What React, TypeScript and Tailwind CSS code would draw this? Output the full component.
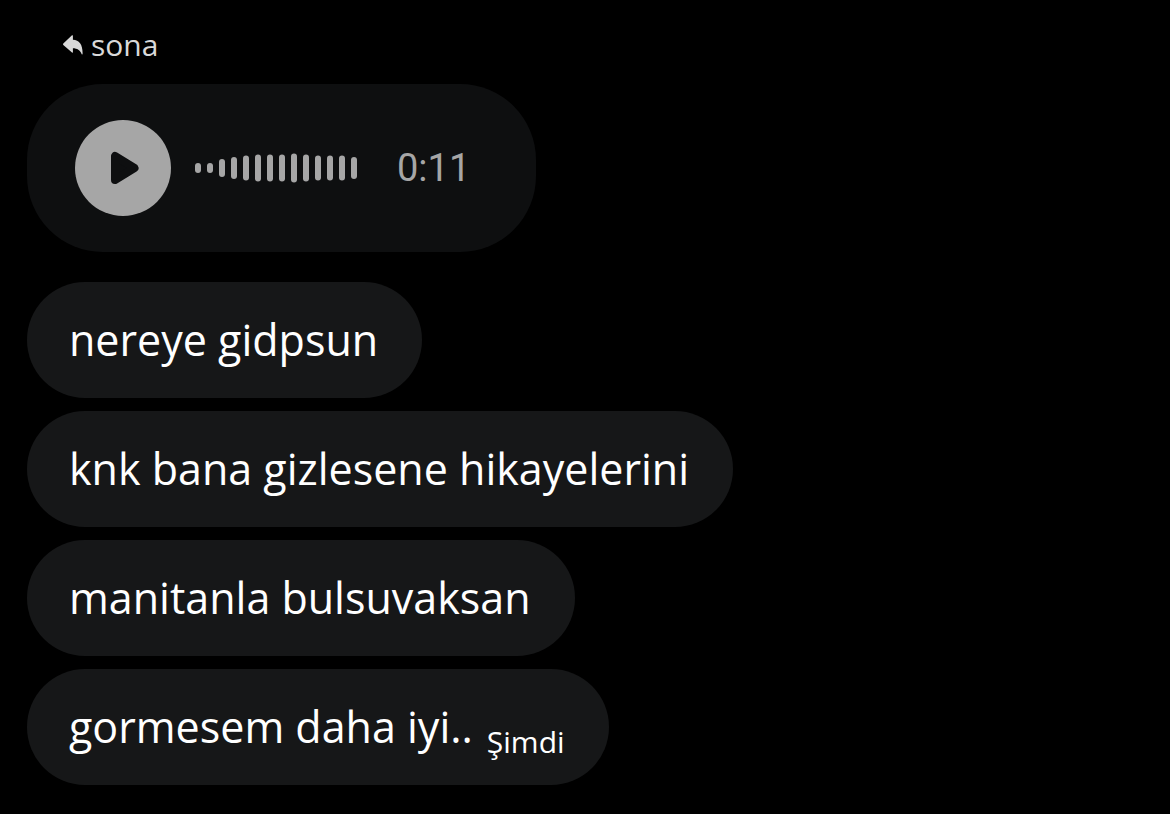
import React from "react"

const messages = [
    { id: 1, text: 'nereye gidpsun' },
    { id: 2, text: 'knk bana gizlesene hikayelerini' },
    { id: 3, text: 'manitanla bulsuvaksan' },
    { id: 4, text: 'gormesem daha iyi..', time: 'Şimdi' },
];

const waveform = [10, 10, 18, 22, 25, 27, 27, 27, 29, 27, 25, 25, 25, 22];

function ReplyIcon() {
    return (
        <svg width='20' height='20' viewBox='0 0 20 20' fill='currentColor' aria-hidden='true'>
            <path d='M0.3 8.4 9 0.3Q9.9-.2 9.9 .8V4.7C16.4 5 19.8 9.6 19.6 18.8Q19.4 20.2 18.6 19C17 15.2 14.4 13.4 9.9 13.3V17Q9.9 18.2 9 17.5L.3 9.9Q-.3 9.2.3 8.4Z' />
        </svg>
    );
}

function VoiceMessage() {
    return (
        <div className='w-fit flex items-center rounded-[76px] bg-[#0e0f10] pl-12 pr-[66px] py-9 text-[#a6a6a6]'>
            <button type='button' aria-label='Oynat' className='size-24 rounded-full bg-[#a6a6a6] text-[#0e0f10]'>
                <svg width='96' height='96' viewBox='0 0 96 96' aria-hidden='true'>
                    <path d='M40 36v24L59.5 48Z' fill='currentColor' stroke='currentColor' strokeWidth='8' strokeLinejoin='round' />
                </svg>
            </button>
            <svg className='ml-6' width='162' height='30' viewBox='0 0 162 30' fill='currentColor' aria-hidden='true'>
                {waveform.map((height, i) => (
                    <rect key={i} x={i * 12} y={15 - height / 2} width='6' height={height} rx='3' />
                ))}
            </svg>
            <span className='ml-10 font-["Roboto",sans-serif] text-[38px] leading-10'>0:11</span>
        </div>
    );
}

export default function App() {
    return (
        <main className='min-h-screen bg-black px-[27px] pt-[25px] pb-7 font-["Open_Sans",sans-serif] text-white'>
            <a href='#' className='w-fit flex items-center gap-2 pl-9 text-[30px] leading-[40px] text-[#d9d9d9]'>
                <ReplyIcon />
                sona
            </a>
            <div className='mt-[19px]'>
                <VoiceMessage />
            </div>
            <ul className='mt-[30px] flex flex-col items-start gap-[13px]'>
                {messages.map((message) => (
                    <li key={message.id} className='flex items-end gap-[14px] rounded-[58px] bg-[#161718] pl-[42px] pr-11 py-7 text-[43px] leading-[60px]'>
                        <p>{message.text}</p>
                        {message.time && <time className='text-[30px] leading-[30px]'>{message.time}</time>}
                    </li>
                ))}
            </ul>
        </main>
    )
}
